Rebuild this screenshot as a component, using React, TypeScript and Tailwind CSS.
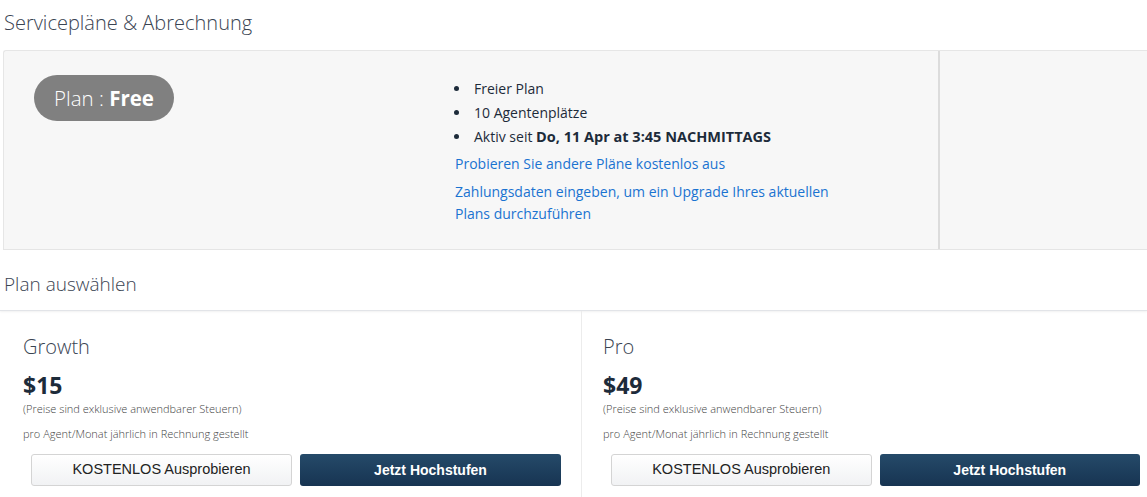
import React from "react";

const plans = [
  { name: "Growth", price: "$15" },
  { name: "Pro", price: "$49" },
];

function PlanCard({ name, price, first }: { name: string; price: string; first?: boolean }) {
  return (
    <div
      className={`h-[190px] shrink-0 pt-[22px] pr-5 ${first ? "w-[579px] border-r border-[#ececec] pl-5" : "w-[578px] pl-[21px]"}`}
    >
      <div className="text-[20px] font-light leading-[28px] text-[#3a4452]">{name}</div>
      <div className="mt-[10px] text-[23px] font-bold leading-[28px] text-[#1d2b3a]">{price}</div>
      <div className="mt-[3px] text-[11px] leading-[14px] font-light text-[#444]">
        (Preise sind exklusive anwendbarer Steuern)
      </div>
      <div className="mt-[11px] text-[11px] leading-[14px] font-light text-[#444]">
        pro Agent/Monat jährlich in Rechnung gestellt
      </div>
      <div className="mt-[13px] flex gap-2 pl-2" style={{ fontFamily: '"Liberation Sans", Arial, sans-serif' }}>
        <button className="h-8 w-[261px] rounded-[3px] border border-[#d4d4d4] bg-gradient-to-b from-white to-[#f1f2f4] text-[14.5px] text-[#222]">
          KOSTENLOS Ausprobieren
        </button>
        <button className="h-8 w-[261px] rounded-[3px] bg-gradient-to-b from-[#254a69] to-[#173452] text-[14px] font-bold text-white">
          Jetzt Hochstufen
        </button>
      </div>
    </div>
  );
}

export default function App() {
  return (
    <div
      className="h-[497px] w-[1147px] overflow-hidden bg-white text-[#1d2b3a]"
      style={{ fontFamily: '"Open Sans", "Noto Sans", sans-serif' }}
    >
      <h1 className="h-[50px] pl-1 pt-[7px] text-[20px] font-light leading-[32px] text-[#3a4452]">
        Servicepläne &amp; Abrechnung
      </h1>

      <div className="ml-[3px] flex h-[200px] rounded-tl-[3px] border-t border-l border-b border-[#e6e6e6] bg-[#f7f7f7]">
        <div className="w-[443px] shrink-0 pl-[30px] pt-6">
          <div className="inline-flex h-[46px] items-center rounded-full bg-[#808080] px-5 text-[20.5px] text-white">
            <span className="font-light">Plan :&nbsp;</span>
            <span className="font-bold">Free</span>
          </div>
        </div>
        <div className="w-[491px] shrink-0 pt-[26px] text-[14px] text-[#1d2b3a]">
          <ul className="list-disc pl-[24px] leading-[24px] marker:text-[#1d2b3a]">
            <li className="pl-[3px]">Freier Plan</li>
            <li className="pl-[3px]">10 Agentenplätze</li>
            <li className="pl-[3px]">
              Aktiv seit <span className="text-[14.5px] font-bold">Do, 11 Apr at 3:45 NACHMITTAGS</span>
            </li>
          </ul>
          <div className="mt-[4px] w-[400px] pl-[8px] text-[#1a73d1]">
            <div className="leading-[22px]">Probieren Sie andere Pläne kostenlos aus</div>
            <div className="mt-[6px] leading-[22px]">
              Zahlungsdaten eingeben, um ein Upgrade Ihres aktuellen Plans durchzuführen
            </div>
          </div>
        </div>
        <div className="flex-1 border-l-2 border-[#dcdcdc]" />
      </div>

      <div className="flex h-[61px] items-center border-b border-[#e2e4e8] pl-1 pt-[9px] shadow-[0_1px_2px_rgba(0,0,0,0.06)]">
        <h2 className="text-[19px] font-light text-[#3a4452]">Plan auswählen</h2>
      </div>

      <div className="ml-[3px] flex">
        {plans.map((p, i) => (
          <PlanCard key={p.name} name={p.name} price={p.price} first={i === 0} />
        ))}
      </div>
    </div>
  );
}
